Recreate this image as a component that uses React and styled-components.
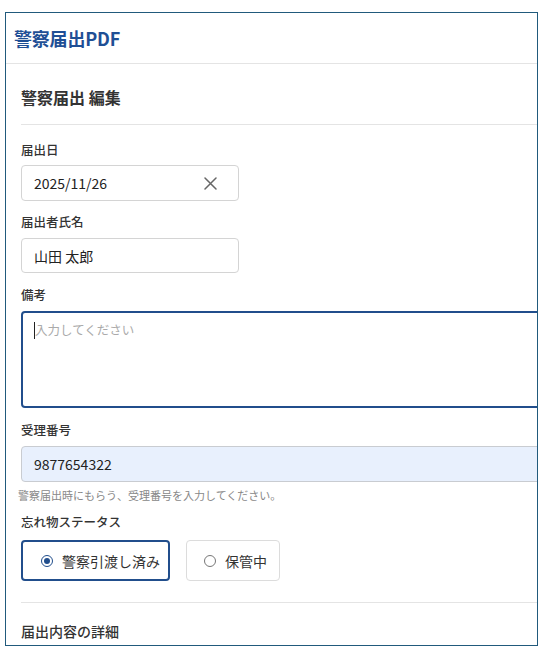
import styled, { createGlobalStyle } from "styled-components";

const GlobalStyle = createGlobalStyle`
  html, body {
    margin: 0;
    padding: 0;
    background: #fff;
  }
  body {
    font-family: "Noto Sans CJK JP", "Noto Sans", sans-serif;
    color: #333;
  }
`;

const Page = styled.div`
  padding: 12px 0 0 5px;
`;

const Frame = styled.div`
  width: 531px;
  height: 632px;
  border: 1.5px solid #215a7c;
  overflow: hidden;
  background: #fff;
`;

const Header = styled.div`
  height: 50px;
  display: flex;
  align-items: center;
  padding-left: 8px;
  border-bottom: 1px solid #e4e4e4;
`;

const HeaderTitle = styled.h1`
  margin: 0;
  font-size: 18px;
  font-weight: 700;
  color: #1f4f95;
  letter-spacing: -0.2px;
`;

const Body = styled.div`
  padding-left: 15px;
  width: 560px;
`;

const Section = styled.div`
  border-bottom: ${(p) => (p.$divider ? "1px solid #e4e4e4" : "none")};
  padding: ${(p) => p.$pad};
`;

const Title = styled.h2`
  margin: 0;
  font-size: 16px;
  line-height: 22px;
  font-weight: 700;
  color: #333;
`;

const Field = styled.div`
  display: flex;
  flex-direction: column;
  margin-bottom: ${(p) => p.$gap ?? 12}px;
`;

const Label = styled.label`
  font-size: 12.5px;
  line-height: 18px;
  font-weight: 500;
  color: #333;
  margin-bottom: ${(p) => p.$space ?? 7}px;
`;

const InputBox = styled.div`
  box-sizing: border-box;
  width: ${(p) => p.$width || "100%"};
  height: ${(p) => p.$height || 36}px;
  display: flex;
  align-items: center;
  padding: 0 12px;
  border: 1px solid ${(p) => (p.$filled ? "#c9ccd1" : "#d4d4d4")};
  border-radius: 4px;
  background: ${(p) => (p.$filled ? "#e8f0fd" : "#fff")};
  font-size: 14px;
  color: #222;
`;

const Value = styled.span`
  flex: 1;
`;

const ClearButton = styled.span`
  display: flex;
  align-items: center;
  margin-right: 9px;
  color: #666;
`;

const TextArea = styled.div`
  box-sizing: border-box;
  width: 100%;
  height: 97px;
  border: 2px solid #214e8c;
  border-radius: 4px;
  padding: 8px 11px;
  font-size: 12.5px;
  line-height: 18px;
  color: #aaa;
  display: flex;
  align-items: flex-start;
`;

const Caret = styled.span`
  display: inline-block;
  width: 1px;
  height: 17px;
  background: #222;
  margin-top: 1px;
`;

const Help = styled.p`
  margin: 6px 0 11px -3px;
  font-size: 11px;
  line-height: 14px;
  color: #888;
`;

const RadioRow = styled.div`
  display: flex;
  gap: 16px;
  padding-bottom: 21px;
`;

const RadioButton = styled.div`
  box-sizing: border-box;
  height: 41px;
  display: flex;
  align-items: center;
  gap: 9px;
  padding: 0 ${(p) => (p.$checked ? 8 : 12)}px 0 ${(p) => (p.$checked ? 18 : 17)}px;
  border: ${(p) => (p.$checked ? "2px solid #214e8c" : "1.5px solid #dcdcdc")};
  border-radius: 4px;
  font-size: 14px;
  color: #333;
`;

const Dot = styled.span`
  box-sizing: border-box;
  width: 12px;
  height: 12px;
  border-radius: 50%;
  border: 1.5px solid ${(p) => (p.$checked ? "#214e8c" : "#777")};
  display: flex;
  align-items: center;
  justify-content: center;
  &::after {
    content: "";
    width: 6px;
    height: 6px;
    border-radius: 50%;
    background: ${(p) => (p.$checked ? "#214e8c" : "transparent")};
  }
`;

const Subheading = styled.div`
  padding-top: 18px;
  font-size: 14px;
  line-height: 20px;
  font-weight: 500;
  color: #333;
`;

const CloseIcon = () => (
  <svg width="13" height="13" viewBox="0 0 13 13" fill="none">
    <path d="M1 1L12 12M12 1L1 12" stroke="currentColor" strokeWidth="1.5" strokeLinecap="round" />
  </svg>
);

const App = () => {
  return (
    <Page>
      <GlobalStyle />
      <Frame>
        <Header>
          <HeaderTitle>警察届出PDF</HeaderTitle>
        </Header>
        <Body>
          <Section $divider $pad="22px 0 16px">
            <Title>警察届出 編集</Title>
          </Section>
          <Section $divider $pad="16px 0 0">
            <Field>
              <Label $space={6}>届出日</Label>
              <InputBox $width="218px">
                <Value>2025/11/26</Value>
                <ClearButton>
                  <CloseIcon />
                </ClearButton>
              </InputBox>
            </Field>
            <Field $gap={13}>
              <Label>届出者氏名</Label>
              <InputBox $width="218px" $height={35}>
                <Value>山田 太郎</Value>
              </InputBox>
            </Field>
            <Field $gap={13}>
              <Label>備考</Label>
              <TextArea>
                <Caret />
                <span>入力してください</span>
              </TextArea>
            </Field>
            <Field $gap={0}>
              <Label>受理番号</Label>
              <InputBox $filled>
                <Value>9877654322</Value>
              </InputBox>
            </Field>
            <Help>警察届出時にもらう、受理番号を入力してください。</Help>
            <Field $gap={0}>
              <Label $space={9}>忘れ物ステータス</Label>
              <RadioRow>
                <RadioButton $checked>
                  <Dot $checked />
                  警察引渡し済み
                </RadioButton>
                <RadioButton>
                  <Dot />
                  保管中
                </RadioButton>
              </RadioRow>
            </Field>
          </Section>
          <Subheading>届出内容の詳細</Subheading>
        </Body>
      </Frame>
    </Page>
  );
};

export default App;
